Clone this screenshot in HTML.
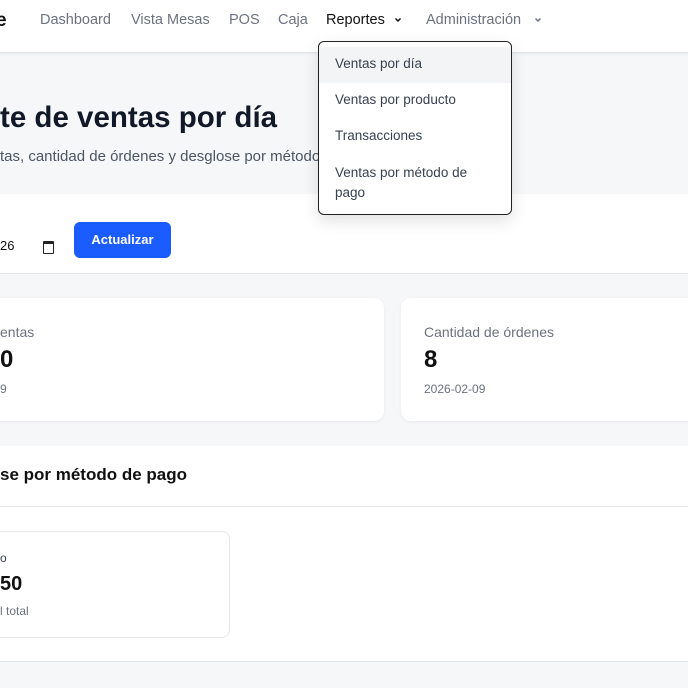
<!DOCTYPE html><html><head><meta charset="utf-8"><style>
body{margin:0;width:688px;height:688px;overflow:hidden;background:#f6f7f9;font-family:"Liberation Sans",sans-serif;position:relative}
.a{position:absolute;white-space:nowrap}
.nav{left:0;top:0;width:688px;height:52px;background:#fff;border-bottom:1px solid #e3e5e8;box-shadow:0 1px 3px rgba(0,0,0,.06)}
.n{top:12px;font-size:14.5px;color:#6b7280}
.card{background:#fff;border-radius:10px;box-shadow:0 1px 3px rgba(0,0,0,.06)}
</style></head><body>
<div class="a nav"></div>
<div class="a" style="left:-4px;top:10px;font-size:19px;font-weight:bold;color:#111">e</div>
<div class="a n" style="left:40px">Dashboard</div>
<div class="a n" style="left:131px">Vista Mesas</div>
<div class="a n" style="left:229px">POS</div>
<div class="a n" style="left:278px">Caja</div>
<div class="a n" style="left:326px;color:#111">Reportes</div>
<svg class="a" style="left:394px;top:16px" width="8" height="8" viewBox="0 0 8 8"><path d="M1.5 2.5L4 5L6.5 2.5" fill="none" stroke="#111" stroke-width="1.5"/></svg>
<div class="a n" style="left:426px">Administración</div>
<svg class="a" style="left:534px;top:16px" width="8" height="8" viewBox="0 0 8 8"><path d="M1.5 2.5L4 5L6.5 2.5" fill="none" stroke="#6b7280" stroke-width="1.5"/></svg>
<div class="a" style="left:0;top:101px;font-size:29.5px;font-weight:bold;color:#111827">te de ventas por día</div>
<div class="a" style="left:0;top:148px;font-size:15px;color:#4b5563">tas, cantidad de órdenes y desglose por método de pago</div>
<div class="a" style="left:0;top:194px;width:688px;height:79px;background:#fff;border-bottom:1px solid #e3e5e8"></div>
<div class="a" style="left:0;top:238px;font-size:13px;color:#111">26</div>
<div class="a" style="left:43px;top:241px;width:9px;height:9px;border:1.5px solid #222;border-top-width:3px;border-radius:1px"></div>
<div class="a" style="left:74px;top:222px;width:97px;height:36px;background:#1a5cff;border-radius:6px;color:#fff;font-size:13px;font-weight:bold;text-align:center;line-height:36px">Actualizar</div>
<div class="a card" style="left:-10px;top:298px;width:394px;height:123px"></div>
<div class="a card" style="left:401px;top:298px;width:300px;height:123px"></div>
<div class="a" style="left:0;top:324px;font-size:14px;color:#6b7280">entas</div>
<div class="a" style="left:0;top:346px;font-size:24px;font-weight:bold;color:#111">0</div>
<div class="a" style="left:0;top:382px;font-size:12px;color:#6b7280">9</div>
<div class="a" style="left:424px;top:324px;font-size:14px;color:#6b7280">Cantidad de órdenes</div>
<div class="a" style="left:424px;top:346px;font-size:24px;font-weight:bold;color:#111">8</div>
<div class="a" style="left:424px;top:382px;font-size:12px;color:#6b7280">2026-02-09</div>
<div class="a" style="left:0;top:446px;width:688px;height:215px;background:#fff;border-bottom:1px solid #e3e5e8"></div>
<div class="a" style="left:0;top:506px;width:688px;height:1px;background:#e5e7eb"></div>
<div class="a" style="left:0;top:465px;font-size:17px;font-weight:bold;color:#111">se por método de pago</div>
<div class="a" style="left:-10px;top:531px;width:238px;height:105px;border:1px solid #e5e7eb;border-radius:8px;background:#fff"></div>
<div class="a" style="left:0;top:551px;font-size:12px;color:#374151">o</div>
<div class="a" style="left:0;top:573px;font-size:20px;font-weight:bold;color:#111">50</div>
<div class="a" style="left:0;top:604px;font-size:12px;color:#6b7280">l total</div>
<div class="a" style="left:318px;top:41px;width:192px;height:172px;background:#fff;border:1px solid #222;border-radius:6px;box-shadow:0 6px 16px rgba(0,0,0,.12);overflow:hidden">
<div style="position:absolute;left:0;top:5px;width:192px;height:36px;background:#f3f4f6"></div>
<div style="position:absolute;left:16px;top:14px;font-size:13.5px;color:#374151">Ventas por día</div>
<div style="position:absolute;left:16px;top:50px;font-size:13.5px;color:#374151">Ventas por producto</div>
<div style="position:absolute;left:16px;top:86px;font-size:13.5px;color:#374151">Transacciones</div>
<div style="position:absolute;left:16px;top:121px;font-size:13.5px;color:#374151;line-height:20px;width:150px;white-space:normal">Ventas por método de pago</div>
</div>
</body></html>
